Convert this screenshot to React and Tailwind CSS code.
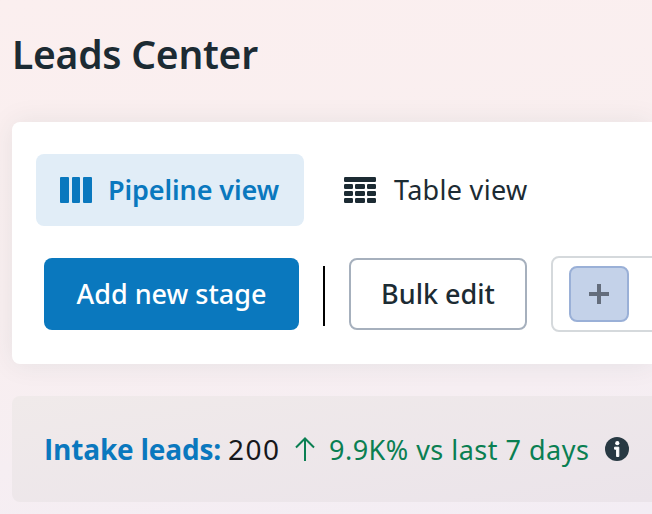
function ColumnsIcon() {
  return (
    <svg width="32" height="26" viewBox="0 0 32 26" className="shrink-0" fill="#0a78be">
      <rect x="0" y="0" width="9" height="26" rx="1" />
      <rect x="12" y="0" width="8" height="26" rx="1" />
      <rect x="23" y="0" width="9" height="26" rx="1" />
    </svg>
  );
}

function TableIcon() {
  return (
    <svg width="32" height="26" viewBox="0 0 32 26" className="shrink-0" fill="#1c2b33">
      <rect x="0" y="0" width="32" height="5" rx="1.2" />
      {[7, 14, 21].map((y) => (
        <g key={y}>
          <rect x="0" y={y} width="9" height="5" rx="1.2" />
          <rect x="11" y={y} width="10" height="5" rx="1.2" />
          <rect x="23" y={y} width="9" height="5" rx="1.2" />
        </g>
      ))}
    </svg>
  );
}

export default function App() {
  return (
    <div className="flex h-[514px] w-[652px] flex-col overflow-hidden bg-linear-170 from-[#fbefef] via-[#f9eff0] to-[#f3edf4] font-['Noto_Sans',sans-serif] text-[#1c2b33]">
      <header className="h-[122px] shrink-0 whitespace-nowrap pt-[24px] pl-3">
        <h1 className="text-[39px] leading-[60px] font-semibold tracking-[-0.25px]">Leads Center</h1>
      </header>

      <main className="flex shrink-0 flex-col gap-8 pl-3">
        <section className="flex h-[242px] flex-col gap-8 rounded-l-lg bg-white pt-8 shadow-[0_0_28px_rgba(30,60,70,0.08)]">
          <nav className="flex h-[72px] pl-6 text-[27px] leading-9 whitespace-nowrap">
            <button className="flex w-[268px] items-center gap-4 rounded-lg bg-[#e1edf7] pl-6 font-semibold tracking-[-0.1px] text-[#0a78be]">
              <ColumnsIcon />
              <span>Pipeline view</span>
            </button>
            <button className="flex items-center gap-[18px] pl-10 tracking-[0.3px]">
              <TableIcon />
              <span>Table view</span>
            </button>
          </nav>

          <div className="flex h-[72px] items-center pl-8 text-[27px] leading-9 font-medium whitespace-nowrap">
            <button className="h-[72px] w-[255px] shrink-0 rounded-lg bg-[#0a78be] text-white">
              <span>Add new stage</span>
            </button>
            <div className="mx-6 h-[60px] w-0.5 shrink-0 translate-y-0.5 bg-black" />
            <button className="h-[72px] w-[178px] shrink-0 rounded-lg border-2 border-[#a6b0bd]">
              <span>Bulk edit</span>
            </button>
            <div className="ml-6 flex h-[76px] w-[140px] shrink-0 rounded-lg border-2 border-[#d5d9dc] pt-2 pl-4">
              <button className="flex h-14 w-[60px] items-center justify-center rounded-lg border-2 border-[#9ab0d7] bg-[#c4d2e9]">
                <svg width="20" height="20" viewBox="0 0 20 20" fill="#646d7c">
                  <path d="M8 0h4v8h8v4h-8v8H8v-8H0V8h8z" />
                </svg>
              </button>
            </div>
          </div>
        </section>

        <section className="flex h-[106px] items-center rounded-l-lg bg-linear-to-br from-[#f0eaea] to-[#ebe4ea] pl-8 text-[27px] leading-9 whitespace-nowrap">
          <div className="w-[184px] shrink-0 font-['Open_Sans','Noto_Sans',sans-serif] text-[28px] font-bold tracking-[-0.2px] text-[#0a78be]">
            <span>Intake leads:</span>
          </div>
          <div className="w-[67px] shrink-0 text-[28px] tracking-[1.5px] text-[#16181b]">
            <span>200</span>
          </div>
          <svg width="20" height="24" viewBox="0 0 20 24" className="mr-[14px] shrink-0" fill="none" stroke="#0a7f52" strokeWidth="2">
            <path d="M10 24V1.5M1 10.5l9-9 9 9" />
          </svg>
          <div className="w-[276px] shrink-0 translate-y-px tracking-[0.48px] text-[#0a7f52]">
            <span>9.9K% vs last 7 days</span>
          </div>
          <svg width="24" height="24" viewBox="0 0 24 24" className="shrink-0">
            <circle cx="12" cy="12" r="12" fill="#283943" />
            <circle cx="12.3" cy="6.2" r="2.1" fill="#fff" />
            <path d="M9.6 10.2h4.2v9.3h-2.2v-7.3h-2z" fill="#fff" stroke="#fff" strokeWidth="1" strokeLinejoin="round" />
          </svg>
        </section>
      </main>
    </div>
  );
}
